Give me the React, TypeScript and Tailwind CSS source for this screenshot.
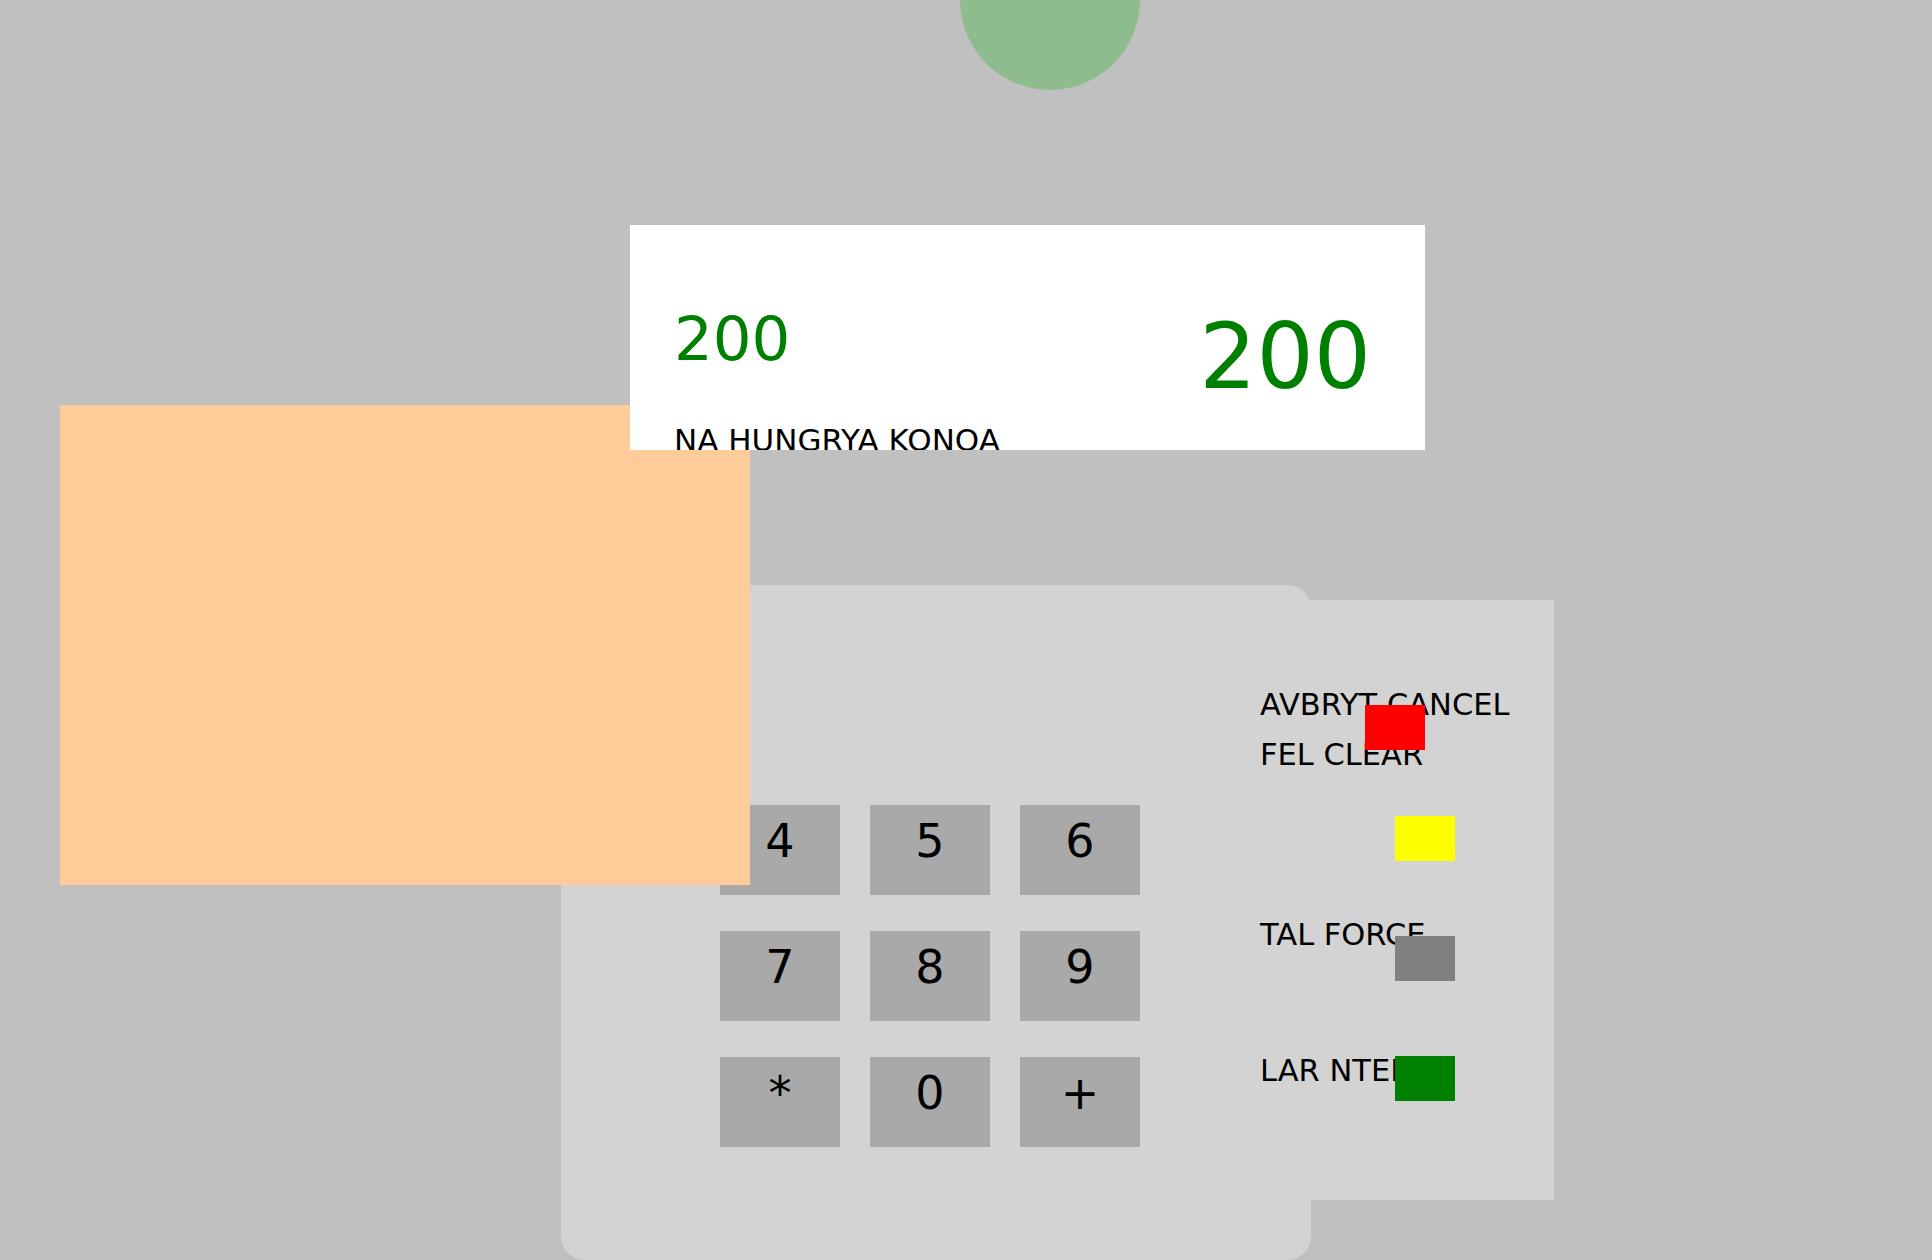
const keys = ["4", "5", "6", "7", "8", "9", "*", "0", "+"];

export default function App() {
  return (
    <div className="relative h-[1260px] w-[1932px] overflow-hidden bg-[#c0c0c0] font-['DejaVu_Sans',sans-serif] text-black">
      {/* status light */}
      <div className="-mt-[90px] ml-[960px] h-[180px] w-[180px] rounded-full bg-[#8fbc8f]" />

      {/* display, sits above the card slot */}
      <div className="relative z-10 mt-[135px] ml-[630px] h-[225px] w-[795px] overflow-hidden bg-white pt-[83px] pl-[44px] pr-[54px]">
        <div className="flex items-start justify-between text-[#008000]">
          <span className="text-[61px] leading-none">200</span>
          <span className="mt-1 text-[90px] leading-none">200</span>
        </div>
        <p className="mt-[23px] whitespace-nowrap text-[31px] leading-none">
          NA HUNGRYA KONOA
        </p>
      </div>

      <div className="mt-[135px] ml-[561px] flex items-start">
        {/* keypad */}
        <div className="h-[675px] w-[750px] shrink-0 rounded-3xl bg-[#d3d3d3] pt-[220px] pl-[159px]">
          <div className="grid grid-cols-[repeat(3,120px)] gap-x-[30px] gap-y-[36px]">
            {keys.map((k) => (
              <div
                key={k}
                className="h-[90px] w-[120px] bg-[#a9a9a9] pt-[13px] text-center text-[46px] leading-none"
              >
                {k}
              </div>
            ))}
          </div>
        </div>

        {/* function keys */}
        <div className="relative mt-[15px] -ml-[81px] h-[600px] w-[324px] shrink-0 bg-[#d3d3d3] pt-[90px] pl-[30px]">
          <div className="flex flex-col whitespace-nowrap text-[30.5px] leading-none">
            <span>AVBRYT CANCEL</span>
            <span className="mt-[19px]">FEL CLEAR</span>
            <span className="mt-[150px]">TAL FORCE</span>
            <span className="mt-[105px]">LAR NTER</span>
          </div>
          <div className="absolute top-[105px] left-[135px] h-[45px] w-[60px] bg-[#ff0000]" />
          <div className="absolute top-[216px] left-[165px] h-[45px] w-[60px] bg-[#ffff00]" />
          <div className="absolute top-[336px] left-[165px] h-[45px] w-[60px] bg-[#808080]" />
          <div className="absolute top-[456px] left-[165px] h-[45px] w-[60px] bg-[#008000]" />
        </div>
      </div>

      {/* card slot */}
      <div className="absolute top-[405px] left-[60px] h-[480px] w-[690px] bg-[#ffcc99]" />
    </div>
  );
}
